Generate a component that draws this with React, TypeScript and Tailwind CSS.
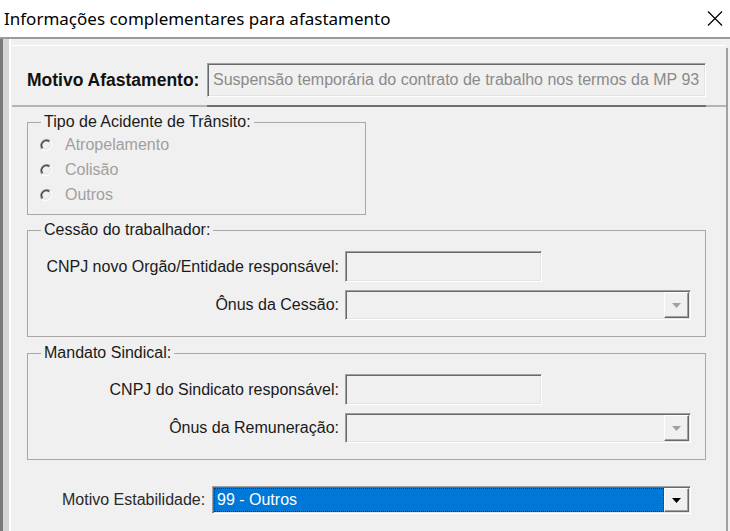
import React from "react";

const sunken =
  "border border-t-[#a0a0a0] border-l-[#a0a0a0] border-b-white border-r-white shadow-[inset_1px_1px_0_#696969,inset_-1px_-1px_0_#e3e3e3]";

function Radio() {
  return (
    <svg width="14" height="14" viewBox="0 0 14 14">
      <circle cx="7" cy="7" r="6" fill="#f0f0f0" />
      <path d="M2.8 11.2 A6 6 0 0 1 11.2 2.8" stroke="#a0a0a0" strokeWidth="1.1" fill="none" />
      <path d="M3.7 10.3 A4.7 4.7 0 0 1 10.3 3.7" stroke="#4a4a4a" strokeWidth="1.5" fill="none" />
      <path d="M11.2 2.8 A6 6 0 0 1 2.8 11.2" stroke="#ffffff" strokeWidth="1.1" fill="none" />
      <path d="M10.3 3.7 A4.7 4.7 0 0 1 3.7 10.3" stroke="#e3e3e3" strokeWidth="1" fill="none" />
    </svg>
  );
}

function DropButton({ active }: { active?: boolean }) {
  return (
    <div className="w-[25px] h-full shrink-0 bg-[#f0f0f0] border border-t-white border-l-white border-b-[#696969] border-r-[#696969] shadow-[inset_-1px_-1px_0_#a0a0a0] flex items-center justify-center">
      <svg width="9" height="5" viewBox="0 0 9 5">
        <path d="M0 0 H9 L4.5 5 Z" fill={active ? "#000000" : "#a0a0a0"} />
      </svg>
    </div>
  );
}

function TextBox() {
  return <div className={`w-[197px] h-[31px] bg-[#f0f0f0] ${sunken}`} />;
}

function Combo() {
  return (
    <div className={`w-[346px] h-[30px] bg-[#f0f0f0] ${sunken} flex justify-end p-[1px]`}>
      <DropButton />
    </div>
  );
}

function Row({ label, children, className = "" }: { label: string; children: React.ReactNode; className?: string }) {
  return (
    <div className={`flex items-center ${className}`}>
      <div className="w-[317px] pr-[6px] text-right leading-[18px]">{label}</div>
      {children}
    </div>
  );
}

export default function App() {
  return (
    <div className="w-[730px] h-[531px] bg-[#f0f0f0] flex flex-col overflow-hidden text-[16px] text-[#1a1a1a] font-['Liberation_Sans',Arial,sans-serif]">
      {/* Title bar */}
      <div className="h-[39px] shrink-0 bg-white border-b-2 border-[#9a9a9a] flex items-center justify-between pl-[4px] pr-[7px]">
        <span className="font-['Noto_Sans',sans-serif] text-[17px] text-black leading-[20px]">
          Informações complementares para afastamento
        </span>
        <svg width="16" height="15" viewBox="0 0 16 15">
          <path d="M1 0.5 L15 14.5 M15 0.5 L1 14.5" stroke="#000" strokeWidth="1.2" fill="none" />
        </svg>
      </div>

      {/* Body */}
      <div className="flex-1 flex flex-row">
        {/* left window edge */}
        <div className="w-[12px] shrink-0 flex flex-row">
          <div className="w-[3px] bg-[#7a7a7a]" />
          <div className="w-[6px] bg-[#d6d6d6]" />
          <div className="w-[2px] bg-white" />
          <div className="w-[1px] bg-[#f0f0f0]" />
        </div>

        {/* main content */}
        <div className="flex-1 flex flex-col">
          {/* Motivo afastamento panel */}
          <div className="mt-[6px] border-t border-white">
            <div className="flex items-center pl-[15px] pt-[17px] pb-[8px]">
              <div className="w-[180px] font-bold text-[17.5px] text-[#111] leading-[20px]">Motivo Afastamento:</div>
              <div className={`w-[499px] h-[34px] ${sunken} flex items-center pl-[5px] text-[#8a8a8a] whitespace-nowrap overflow-hidden`}>
                Suspensão temporária do contrato de trabalho nos termos da MP 93
              </div>
            </div>
            <div className="flex h-[2px]">
              <div className="w-[195px] bg-[#b4b4b4]" />
              <div className="w-[499px] bg-[#6e6e6e]" />
              <div className="flex-1 bg-[#b4b4b4]" />
            </div>
          </div>

          {/* Tipo de acidente */}
          <fieldset className="mt-[6px] ml-[15px] w-[339px] border border-[#a8a8a8] pt-[1px] pb-[7px]">
            <legend className="ml-[13px] px-[3px] leading-[18px]">Tipo de Acidente de Trânsito:</legend>
            {["Atropelamento", "Colisão", "Outros"].map((t) => (
              <div key={t} className="h-[25px] flex items-center pl-[11px] gap-[12px] text-[#a0a0a0]">
                <Radio />
                <span className="leading-[18px]">{t}</span>
              </div>
            ))}
          </fieldset>

          {/* Cessão do trabalhador */}
          <fieldset className="mt-[6px] ml-[15px] mr-[20px] border border-[#a8a8a8] pt-[12px] pb-[16px]">
            <legend className="ml-[13px] px-[3px] leading-[18px]">Cessão do trabalhador:</legend>
            <Row label="CNPJ novo Orgão/Entidade responsável:">
              <TextBox />
            </Row>
            <Row label="Ônus da Cessão:" className="mt-[8px]">
              <Combo />
            </Row>
          </fieldset>

          {/* Mandato Sindical */}
          <fieldset className="mt-[7px] ml-[15px] mr-[20px] border border-[#a8a8a8] pt-[12px] pb-[16px]">
            <legend className="ml-[13px] px-[3px] leading-[18px]">Mandato Sindical:</legend>
            <Row label="CNPJ do Sindicato responsável:">
              <TextBox />
            </Row>
            <Row label="Ônus da Remuneração:" className="mt-[8px]">
              <Combo />
            </Row>
          </fieldset>

          {/* Motivo Estabilidade */}
          <div className="mt-[26px] flex items-center pl-[50px]">
            <div className="w-[150px] leading-[18px] text-[#2a2a2a]">Motivo Estabilidade:</div>
            <div className={`w-[479px] h-[28px] bg-white ${sunken} flex p-[1px]`}>
              <div className="flex-1 bg-[#0078d7] outline outline-1 outline-dotted outline-[#333] -outline-offset-1 flex items-center pl-[3px] text-white leading-[18px]">
                99 - Outros
              </div>
              <DropButton active />
            </div>
          </div>
        </div>

        {/* right edge */}
        <div className="w-[4px] shrink-0 pt-[9px]">
          <div className="w-[2px] h-full bg-[#a0a0a0]" />
        </div>
      </div>
    </div>
  );
}
